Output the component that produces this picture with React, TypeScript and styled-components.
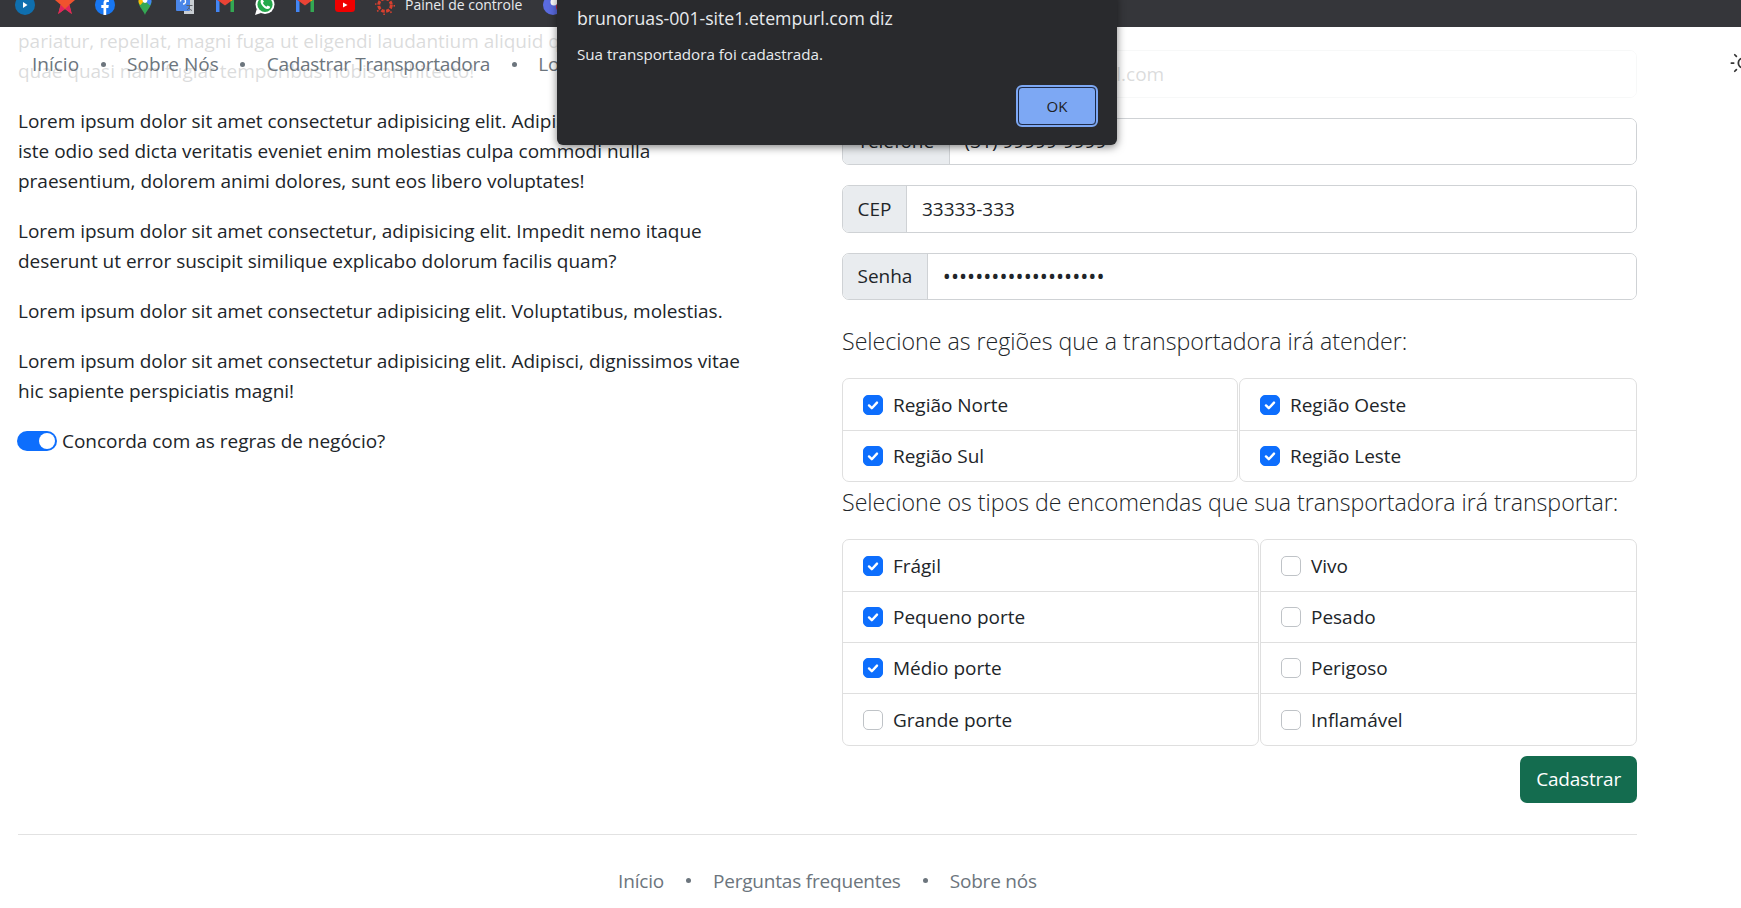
import { styled, createGlobalStyle } from "styled-components";
import { Sun } from "lucide-react";

const GlobalStyle = createGlobalStyle`
  html, body {
    margin: 0;
    height: 908px;
    overflow: hidden;
    background: #fff;
  }
  body {
    font-family: "Open Sans", "Liberation Sans", sans-serif;
    font-size: 19px;
    line-height: 30px;
    letter-spacing: -0.02px;
    color: #212529;
  }
  * {
    box-sizing: border-box;
  }
`;

function CheckMark() {
  return (
    <svg width="16" height="16" viewBox="0 0 20 20" fill="none">
      <path d="M5 10.500l3.500 3.500L15 7" stroke="#fff" strokeWidth="3" strokeLinecap="round" strokeLinejoin="round" />
    </svg>
  );
}

function Options({ items }: { items: [string, boolean][] }) {
  return (
    <ListCol>
      {items.map(([name, checked]) => (
        <ListItem key={name}>
          <CheckBox $checked={checked}>{checked && <CheckMark />}</CheckBox>
          {name}
        </ListItem>
      ))}
    </ListCol>
  );
}

function GmailIcon() {
  return (
    <svg width="20" height="20" viewBox="0 0 20 20">
      <path d="M1 17V4l3.500 2.500V17z" fill="#4285f4" />
      <path d="M15.500 17V6.500L19 4v13z" fill="#34a853" />
      <path d="M1 4l9 6.500L19 4V0h-3l-6 5-6-5H1z" fill="#ea4335" />
      <path d="M16 0h3v4l-3.500 2.500z" fill="#fbbc04" />
    </svg>
  );
}

function Bookmarks() {
  return (
    <BookmarkBar>
      <Bookmark>
        <svg width="20" height="20" viewBox="0 0 20 20">
          <circle cx="10" cy="10" r="10" fill="#0f6fae" />
          <path d="M8 7l4.500 3L8 13z" fill="#fff" />
        </svg>
      </Bookmark>
      <Bookmark>
        <svg width="20" height="20" viewBox="0 0 20 20">
          <path d="M10 -2l2.800 7H20l-5.600 4.800 2.400 9.200L10 14l-6.800 5 2.400-9.200L0 5h7.200z" fill="#f0522e" />
          <path d="M14.400 9.800l2.400 9.200L10 14z" fill="#e0245e" />
          <path d="M5.600 9.800L3.200 19 10 14z" fill="#e0245e" />
        </svg>
      </Bookmark>
      <Bookmark>
        <svg width="20" height="20" viewBox="0 0 20 20">
          <circle cx="10" cy="10" r="10" fill="#1877f2" />
          <path d="M8.500 20v-7H6.300v-3h2.200V8c0-2.400 1.400-3.600 3.500-3.600h1.900V7h-1.300c-1.100 0-1.400.6-1.400 1.400V10h2.600l-.4 3h-2.200v7z" fill="#fff" />
        </svg>
      </Bookmark>
      <Bookmark>
        <svg width="20" height="20" viewBox="0 0 20 20">
          <path d="M10 20C9 16 3.500 12 3.500 6h13C16.500 12 11 16 10 20z" fill="#34a853" />
          <path d="M3.500 6c0-1.500.5-3 1.500-4l4 4-3.500 4C4 9 3.500 7.500 3.500 6z" fill="#fbbc04" />
          <path d="M5 2c1.300-1.300 3-2 5-2v6z" fill="#ea4335" />
          <path d="M10 0c3.800 0 6.500 2.800 6.500 6 0 1.500-.5 3-1.500 4.500L10 6z" fill="#4285f4" />
          <circle cx="10" cy="5.500" r="2.400" fill="#fff" />
        </svg>
      </Bookmark>
      <Bookmark>
        <svg width="20" height="20" viewBox="0 0 20 20">
          <rect x="9" y="2" width="10" height="17" fill="#c9ced3" />
          <rect x="1" y="-3" width="14" height="19" rx="1" fill="#4a86e8" />
          <path d="M5.500 6.500a2.500 2.500 0 1 1 2.500 2.500" stroke="#fff" strokeWidth="1.300" fill="none" />
          <path d="M11.500 10.500h6M14.500 10.500c0 2-1 3.500-2.500 4.500M14 13c.5 1 1.500 2 3 2.500" stroke="#5f6368" strokeWidth="1" fill="none" />
        </svg>
      </Bookmark>
      <Bookmark>
        <GmailIcon />
      </Bookmark>
      <Bookmark>
        <svg width="20" height="20" viewBox="0 0 20 20">
          <circle cx="10" cy="9.500" r="9.500" fill="#fff" />
          <path d="M0 20l1.800-6L6 18z" fill="#fff" />
          <circle cx="10" cy="9.500" r="7.600" fill="#25a84a" />
          <path d="M7 4c-1.500 1-2 3-.5 5.500s4 4.500 6 4.500c1.500 0 2.500-1 2.700-2.300L12.700 10.500l-1.300 1.200c-1.500-.6-3-2.200-3.500-3.600L9 6.500z" fill="#fff" />
        </svg>
      </Bookmark>
      <Bookmark>
        <GmailIcon />
      </Bookmark>
      <Bookmark>
        <svg width="20" height="20" viewBox="0 0 20 20">
          <rect x="0" y="0" width="20" height="17" rx="3.500" fill="#f00000" />
          <path d="M8 7.500l4.500 2.500L8 12.500z" fill="#fff" />
        </svg>
      </Bookmark>
      <Bookmark>
        <svg width="20" height="20" viewBox="0 0 20 20">
          <circle cx="10" cy="10" r="6.300" fill="none" stroke="#d8402f" strokeWidth="3" strokeDasharray="3.500 1.450" />
          <circle cx="10" cy="10" r="9.300" fill="none" stroke="#d8402f" strokeWidth="1.500" strokeDasharray="1.600 5.700" />
        </svg>
      </Bookmark>
      <BookmarkLabel>Painel de controle</BookmarkLabel>
      <Bookmark>
        <svg width="20" height="20" viewBox="0 0 20 20">
          <circle cx="10" cy="10" r="10" fill="#5a6be0" />
          <circle cx="11" cy="7" r="3.500" fill="#fff" />
          <circle cx="17" cy="12" r="4" fill="#c4283c" />
        </svg>
      </Bookmark>
    </BookmarkBar>
  );
}

export default function App() {
  return (
    <Page>
      <GlobalStyle />
      <Bookmarks />

      <Nav>
        <NavLink>Início</NavLink>
        <Dot />
        <NavLink>Sobre Nós</NavLink>
        <Dot />
        <NavLink $tracking={-0.3}>Cadastrar Transportadora</NavLink>
        <Dot />
        <NavLink>Login</NavLink>
        <ThemeToggle>
          <Sun size={28} strokeWidth={1.5} />
        </ThemeToggle>
      </Nav>

      <Dialog>
        <DialogTitle>brunoruas-001-site1.etempurl.com diz</DialogTitle>
        <DialogText>Sua transportadora foi cadastrada.</DialogText>
        <DialogActions>
          <OkButton>OK</OkButton>
        </DialogActions>
      </Dialog>

      <Container>
        <Columns>
          <TextColumn>
            <Paragraph>
              pariatur, repellat, magni fuga ut eligendi laudantium aliquid quos
              <br />
              quae quasi nam fugiat temporibus nobis architecto!
            </Paragraph>
            <Paragraph>
              Lorem ipsum dolor sit amet consectetur adipisicing elit. Adipisci,
              <br />
              iste odio sed dicta veritatis eveniet enim molestias culpa commodi nulla
              <br />
              praesentium, dolorem animi dolores, sunt eos libero voluptates!
            </Paragraph>
            <Paragraph>
              Lorem ipsum dolor sit amet consectetur, adipisicing elit. Impedit nemo itaque
              <br />
              deserunt ut error suscipit similique explicabo dolorum facilis quam?
            </Paragraph>
            <Paragraph>Lorem ipsum dolor sit amet consectetur adipisicing elit. Voluptatibus, molestias.</Paragraph>
            <Paragraph>
              Lorem ipsum dolor sit amet consectetur adipisicing elit. Adipisci, dignissimos vitae
              <br />
              hic sapiente perspiciatis magni!
            </Paragraph>
            <SwitchRow>
              <Switch />
              Concorda com as regras de negócio?
            </SwitchRow>
          </TextColumn>

          <Form>
            <InputGroup>
              <InputLabel>E-mail</InputLabel>
              <Input type="text" defaultValue="transportesa@gmail.com" readOnly />
            </InputGroup>
            <InputGroup>
              <InputLabel>Telefone</InputLabel>
              <Input type="text" defaultValue="(31) 99999-9999" readOnly />
            </InputGroup>
            <InputGroup>
              <InputLabel>CEP</InputLabel>
              <Input type="text" defaultValue="33333-333" readOnly />
            </InputGroup>
            <InputGroup>
              <InputLabel>Senha</InputLabel>
              <Input type="password" defaultValue="12345678901234567890" readOnly />
            </InputGroup>

            <SectionTitle $top={26}>Selecione as regiões que a transportadora irá atender:</SectionTitle>
            <ListGroup $left={396}>
              <Options items={[["Região Norte", true], ["Região Sul", true]]} />
              <Options items={[["Região Oeste", true], ["Região Leste", true]]} />
            </ListGroup>

            <SectionTitle $top={5}>Selecione os tipos de encomendas que sua transportadora irá transportar:</SectionTitle>
            <ListGroup $left={417}>
              <Options
                items={[
                  ["Frágil", true],
                  ["Pequeno porte", true],
                  ["Médio porte", true],
                  ["Grande porte", false],
                ]}
              />
              <Options
                items={[
                  ["Vivo", false],
                  ["Pesado", false],
                  ["Perigoso", false],
                  ["Inflamável", false],
                ]}
              />
            </ListGroup>

            <FormActions>
              <SubmitButton type="button">Cadastrar</SubmitButton>
            </FormActions>
          </Form>
        </Columns>

        <Footer>
          <FooterLink>Início</FooterLink>
          <Dot />
          <FooterLink>Perguntas frequentes</FooterLink>
          <Dot />
          <FooterLink>Sobre nós</FooterLink>
        </Footer>
      </Container>
    </Page>
  );
}

const Page = styled.div`
  position: relative;
  width: 1741px;
  height: 908px;
  overflow: hidden;
`;

const BookmarkBar = styled.div`
  display: flex;
  height: 27px;
  padding-left: 5px;
  background: #35363a;
  overflow: hidden;
`;

const Bookmark = styled.div`
  flex: 0 0 40px;
  height: 27px;
  padding-bottom: 12px;
  display: flex;
  justify-content: center;
  align-items: flex-end;
  svg {
    overflow: visible;
    flex: none;
  }
`;

const BookmarkLabel = styled.div`
  flex: 0 0 128px;
  height: 27px;
  padding-bottom: 13px;
  display: flex;
  align-items: flex-end;
  font-size: 14px;
  line-height: 18px;
  color: #e8eaed;
  white-space: nowrap;
`;

const Nav = styled.nav`
  position: absolute;
  top: 27px;
  left: 0;
  right: 0;
  height: 78px;
  padding: 0 0 4px 32px;
  display: flex;
  align-items: center;
  gap: 21.500px;
  background: rgba(255, 255, 255, 0.84);
  overflow: hidden;
`;

const NavLink = styled.span<{ $tracking?: number }>`
  color: #6c757d;
  letter-spacing: ${(p) => p.$tracking ?? 0}px;
  white-space: nowrap;
`;

const ThemeToggle = styled.div`
  position: absolute;
  top: 22px;
  left: 1729px;
  color: #333;
`;

const Dot = styled.span`
  width: 5px;
  height: 5px;
  border-radius: 50%;
  background: #6c757d;
  flex: none;
`;

const Dialog = styled.div`
  position: absolute;
  top: -6px;
  left: 557px;
  width: 560px;
  height: 151px;
  padding: 12px 20px 0;
  background: #292a2d;
  border-radius: 0 0 6px 6px;
  box-shadow: 0 2px 8px rgba(0, 0, 0, 0.5);
  z-index: 2;
`;

const DialogTitle = styled.div`
  font-size: 17.700px;
  line-height: 24px;
  color: #e8eaed;
`;

const DialogText = styled.div`
  margin-top: 14px;
  font-size: 15.200px;
  line-height: 20px;
  color: #e8eaed;
`;

const DialogActions = styled.div`
  margin-top: 23px;
  display: flex;
  justify-content: flex-end;
  margin-right: 1px;
`;

const OkButton = styled.button`
  width: 78px;
  height: 38px;
  font-family: "Open Sans", sans-serif;
  font-size: 15px;
  color: #202124;
  background: #7da8f4;
  border: 1px solid #1d2b4a;
  border-radius: 4px;
  outline: 2px solid #7da8f4;
  outline-offset: 0;
`;

const Container = styled.div`
  width: 1619px;
  margin-left: 18px;
`;

const Columns = styled.div`
  display: grid;
  grid-template-columns: 824px 795px;
`;

const TextColumn = styled.div`
  margin-top: -1px;
`;

const Paragraph = styled.p`
  margin: 0 0 20px;
  white-space: nowrap;
`;

const SwitchRow = styled.div`
  display: flex;
  align-items: center;
  gap: 5px;
  margin-left: -1px;
`;

const Switch = styled.span`
  position: relative;
  width: 40px;
  height: 20px;
  border-radius: 10px;
  background: #0d6efd;
  &::after {
    content: "";
    position: absolute;
    top: 2px;
    right: 2px;
    width: 16px;
    height: 16px;
    border-radius: 50%;
    background: #fff;
  }
`;

const Form = styled.form`
  padding-top: 23px;
`;

const InputGroup = styled.div`
  display: flex;
  height: 47.500px;
  margin-bottom: 20px;
  border: 1px solid #cfd2d5;
  border-radius: 7px;
  overflow: hidden;
`;

const InputLabel = styled.span`
  display: flex;
  align-items: center;
  padding: 0 14.500px;
  background: #e9ecef;
  border-right: 1px solid #cfd2d5;
  white-space: nowrap;
`;

const Input = styled.input`
  flex: 1;
  min-width: 0;
  padding: 0 15px;
  border: 0;
  outline: 0;
  font: inherit;
  color: #212529;
  background: #fff;
  &[type="password"] {
    font-size: 21.500px;
  }
`;

const SectionTitle = styled.h5<{ $top: number }>`
  margin: ${(p) => p.$top}px 0 22px;
  font-size: 23.200px;
  font-weight: 300;
  line-height: 30px;
  white-space: nowrap;
`;

const ListGroup = styled.div<{ $left: number }>`
  display: grid;
  grid-template-columns: ${(p) => p.$left}px 1fr;
  gap: 1px;
`;

const ListCol = styled.div`
  border: 1px solid #dfdfdf;
  border-radius: 7px;
`;

const ListItem = styled.div`
  display: flex;
  align-items: center;
  gap: 10px;
  height: 51.100px;
  padding-left: 20px;
  & + & {
    border-top: 1px solid #dfdfdf;
  }
`;

const CheckBox = styled.span<{ $checked: boolean }>`
  display: flex;
  align-items: center;
  justify-content: center;
  width: 20px;
  height: 20px;
  border-radius: 5px;
  background: ${(p) => (p.$checked ? "#0d6efd" : "#fff")};
  border: 1px solid ${(p) => (p.$checked ? "#0d6efd" : "#bfc3c7")};
`;

const FormActions = styled.div`
  display: flex;
  justify-content: flex-end;
  margin-top: 10px;
`;

const SubmitButton = styled.button`
  height: 47px;
  padding: 0 16px;
  font: inherit;
  letter-spacing: -0.2px;
  color: #fff;
  background: #146c4f;
  border: 0;
  border-radius: 7px;
`;

const Footer = styled.footer`
  display: flex;
  justify-content: center;
  align-items: center;
  gap: 22px;
  margin-top: 31px;
  padding-top: 31px;
  border-top: 1px solid #e2e2e2;
`;

const FooterLink = styled.span`
  color: #6c757d;
  letter-spacing: -0.2px;
`;
